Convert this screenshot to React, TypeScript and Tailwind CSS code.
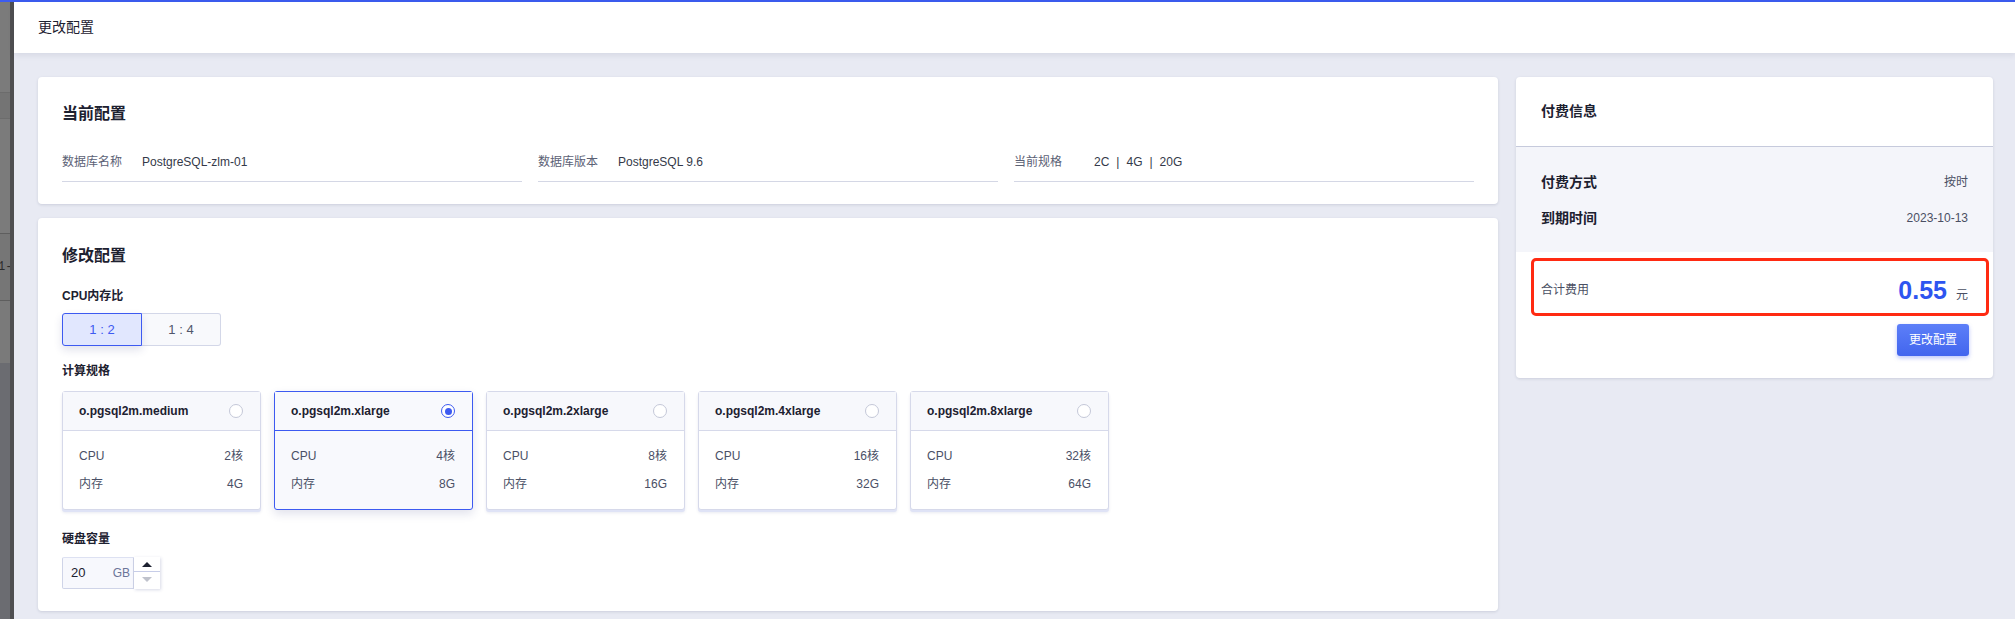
import React from "react";

const specs = [
  { name: "o.pgsql2m.medium", cpu: "2核", mem: "4G", selected: false },
  { name: "o.pgsql2m.xlarge", cpu: "4核", mem: "8G", selected: true },
  { name: "o.pgsql2m.2xlarge", cpu: "8核", mem: "16G", selected: false },
  { name: "o.pgsql2m.4xlarge", cpu: "16核", mem: "32G", selected: false },
  { name: "o.pgsql2m.8xlarge", cpu: "32核", mem: "64G", selected: false },
];

function Radio({ checked }: { checked: boolean }) {
  return checked ? (
    <span className="flex h-[14px] w-[14px] items-center justify-center rounded-full border border-[#3d5af1] bg-white">
      <span className="h-[7px] w-[7px] rounded-full bg-[#3d5af1]" />
    </span>
  ) : (
    <span className="h-[14px] w-[14px] rounded-full border border-[#c4c8d8] bg-white" />
  );
}

function SpecCard({ s }: { s: (typeof specs)[number] }) {
  return (
    <div
      className={
        s.selected
          ? "w-[199px] rounded-[3px] border border-[#3d5af1] bg-[#f8f9fd] shadow-[0_4px_10px_rgba(40,50,120,0.14)]"
          : "w-[199px] rounded-[3px] border border-[#d6d9ea] bg-white shadow-[0_2px_0_#dfe3f6,0_3px_3px_rgba(40,50,120,0.10)]"
      }
    >
      <div
        className={
          s.selected
            ? "flex h-[39px] items-center justify-between border-b border-[#3d5af1] bg-[#f8f9fd] pl-[16px] pr-[17px]"
            : "flex h-[39px] items-center justify-between border-b border-[#d6d9ea] bg-[#f7f8fc] pl-[16px] pr-[17px]"
        }
      >
        <span className="text-[12px] font-semibold text-[#1d2130]">{s.name}</span>
        <Radio checked={s.selected} />
      </div>
      <div className="flex flex-col gap-[10px] pb-[16px] pl-[16px] pr-[17px] pt-[16px] text-[12px] text-[#4a5066]">
        <div className="flex h-[18px] items-center justify-between">
          <span>CPU</span>
          <span>{s.cpu}</span>
        </div>
        <div className="flex h-[18px] items-center justify-between">
          <span>内存</span>
          <span>{s.mem}</span>
        </div>
      </div>
    </div>
  );
}

function Field({ label, children }: { label: string; children: React.ReactNode }) {
  return (
    <div className="flex h-[30px] items-start border-b border-[#d4d7e5] pb-[9px] text-[12px]">
      <div className="flex h-[20px] items-center">
        <span className="w-[80px] text-[#5b6175]">{label}</span>
        <span className="text-[#343949]">{children}</span>
      </div>
    </div>
  );
}

export default function App() {
  return (
    <div className="flex h-[619px] w-[2015px] flex-col overflow-hidden bg-[#e8eaf3] font-['Liberation_Sans','Noto_Sans_CJK_SC',sans-serif]">
      <div className="h-[2px] w-full shrink-0 bg-[#3c5cf0]" />
      <div className="flex min-h-0 flex-1">
        {/* dimmed page behind drawer */}
        <div className="flex w-[14px] shrink-0">
          <div className="flex w-[10px] flex-col overflow-hidden bg-[#7a7a7a]">
            <div className="h-[90px] shrink-0 bg-[#7b7b7b]" />
            <div className="h-[26px] shrink-0 border-t border-[#6c6c6c] bg-[#747474]" />
            <div className="h-[115px] shrink-0 border-t border-[#6c6c6c] bg-[#7b7b7b]" />
            <div className="flex h-[67px] shrink-0 items-center overflow-hidden border-t border-[#5e5e5e] bg-[#767676]">
              <span className="ml-[-2px] whitespace-nowrap font-['Liberation_Mono',monospace] text-[12px] leading-none text-[#2b2b2b]">
                1-
              </span>
            </div>
            <div className="h-[63px] shrink-0 border-t border-[#5e5e5e] bg-[#7a7a7a]" />
            <div className="flex-1 bg-[#6b6c71]" />
          </div>
          <div className="w-[4px] bg-[#4f4f51]" />
        </div>

        {/* drawer */}
        <div className="flex min-w-0 flex-1 flex-col">
          <div className="relative z-10 flex h-[51px] shrink-0 items-center bg-white px-[24px] shadow-[0_2px_6px_rgba(40,50,90,0.10)]">
            <span className="text-[14px] text-[#1d2130]">更改配置</span>
          </div>

          <div className="flex min-h-0 flex-1 gap-[18px] pl-[24px] pr-[22px] pt-[24px]">
            {/* left column */}
            <div className="flex min-w-0 flex-1 flex-col gap-[14px]">
              <div className="rounded-[4px] bg-white px-[24px] pb-[22px] pt-[27px] shadow-[0_1px_3px_rgba(30,40,80,0.14)]">
                <div className="flex h-[20px] items-center text-[16px] font-bold text-[#1d2130]">当前配置</div>
                <div className="mt-[28px] grid grid-cols-3 gap-[16px]">
                  <Field label="数据库名称">PostgreSQL-zlm-01</Field>
                  <Field label="数据库版本">PostgreSQL 9.6</Field>
                  <Field label="当前规格">
                    <span>2C</span>
                    <span className="mx-[7px]">|</span>
                    <span>4G</span>
                    <span className="mx-[7px]">|</span>
                    <span>20G</span>
                  </Field>
                </div>
              </div>

              <div className="rounded-[4px] bg-white px-[24px] pb-[22px] pt-[28px] shadow-[0_1px_3px_rgba(30,40,80,0.14)]">
                <div className="flex h-[20px] items-center text-[16px] font-bold text-[#1d2130]">修改配置</div>

                <div className="mt-[21px] flex h-[18px] items-center text-[12px] font-bold text-[#1d2130]">CPU内存比</div>
                <div className="mt-[8px] flex">
                  <div className="relative z-10 flex h-[33px] w-[80px] items-center justify-center rounded-l-[3px] border border-[#3d5af1] bg-[#e1e7fe] text-[13px] text-[#3d5af1] shadow-[0_4px_8px_rgba(40,50,120,0.14)]">
                    1 : 2
                  </div>
                  <div className="flex h-[33px] w-[79px] items-center justify-center rounded-r-[3px] border border-l-0 border-[#d3d7e8] bg-[#f8f9fc] text-[13px] text-[#50566b]">
                    1 : 4
                  </div>
                </div>

                <div className="mt-[16px] flex h-[18px] items-center text-[12px] font-bold text-[#1d2130]">计算规格</div>
                <div className="mt-[11px] flex gap-[13px]">
                  {specs.map((s) => (
                    <SpecCard key={s.name} s={s} />
                  ))}
                </div>

                <div className="mt-[20px] flex h-[18px] items-center text-[12px] font-bold text-[#1d2130]">硬盘容量</div>
                <div className="mt-[9px] flex">
                  <div className="flex h-[32px] w-[72px] items-center justify-between rounded-l-[2px] border border-[#cfd4e8] border-t-[#dde1f2] bg-[#f7f8fd] pl-[8px] pr-[3px]">
                    <span className="text-[13px] text-[#1d2130]">20</span>
                    <span className="text-[12px] text-[#6b7599]">GB</span>
                  </div>
                  <div className="flex h-[32px] w-[26px] flex-col bg-white shadow-[1px_1px_3px_rgba(40,50,120,0.18)]">
                    <div className="flex h-[15px] items-end justify-center border-b border-[#c7cde8] pb-[4px]">
                      <svg width="10" height="5" viewBox="0 0 10 5">
                        <path d="M0 5 L5 0 L10 5 Z" fill="#1d2130" />
                      </svg>
                    </div>
                    <div className="flex flex-1 items-start justify-center pt-[5px]">
                      <svg width="10" height="5" viewBox="0 0 10 5">
                        <path d="M0 0 L5 5 L10 0 Z" fill="#bfc2cc" />
                      </svg>
                    </div>
                  </div>
                </div>
              </div>
            </div>

            {/* right column */}
            <div className="w-[477px] shrink-0 self-start rounded-[4px] bg-white pb-[22px] shadow-[0_1px_3px_rgba(30,40,80,0.14)]">
              <div className="flex h-[70px] items-center border-b border-[#c6cadc] px-[25px]">
                <span className="text-[14px] font-bold text-[#1d2130]">付费信息</span>
              </div>
              <div className="flex flex-col gap-[18px] bg-[#f4f5fa] px-[25px] pb-[25px] pt-[26px]">
                <div className="flex h-[18px] items-center justify-between">
                  <span className="text-[14px] font-bold text-[#1d2130]">付费方式</span>
                  <span className="text-[12px] text-[#4a4f63]">按时</span>
                </div>
                <div className="flex h-[18px] items-center justify-between">
                  <span className="text-[14px] font-bold text-[#1d2130]">到期时间</span>
                  <span className="text-[12px] text-[#4a4f63]">2023-10-13</span>
                </div>
              </div>
              <div className="ml-[15px] mr-[4px] mt-[6px] flex h-[58px] items-center justify-between rounded-[5px] border-[3px] border-[#ff2a12] pl-[7px] pr-[18px] pt-[6px]">
                <span className="text-[12px] text-[#4a4f63]">合计费用</span>
                <span className="flex items-baseline">
                  <span className="text-[25px] font-bold leading-none text-[#2e55f0]">0.55</span>
                  <span className="ml-[9px] text-[12px] leading-none text-[#4a4f63]">元</span>
                </span>
              </div>
              <div className="mt-[8px] flex justify-end pr-[24px]">
                <button className="h-[32px] w-[72px] rounded-[3px] bg-gradient-to-b from-[#5d7ff8] to-[#4265ee] text-[12px] text-white shadow-[0_2px_4px_rgba(60,90,240,0.35)]">
                  更改配置
                </button>
              </div>
            </div>
          </div>
        </div>
      </div>
    </div>
  );
}
